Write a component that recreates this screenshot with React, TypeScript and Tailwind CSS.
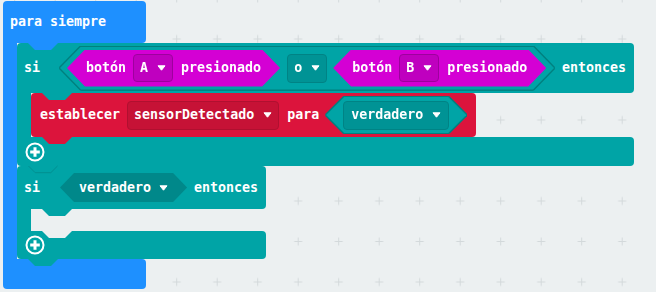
import React from "react"

const hex21 =
	"[clip-path:polygon(21px_0,calc(100%_-_21px)_0,100%_50%,calc(100%_-_21px)_100%,21px_100%,0_50%)]"
const hex18 =
	"[clip-path:polygon(18px_0,calc(100%_-_18px)_0,100%_50%,calc(100%_-_18px)_100%,18px_100%,0_50%)]"
const hex14 =
	"[clip-path:polygon(14px_0,calc(100%_-_14px)_0,100%_50%,calc(100%_-_14px)_100%,14px_100%,0_50%)]"
const tealOutline =
	"[filter:drop-shadow(1px_0_0_#00807f)_drop-shadow(-1px_0_0_#00807f)_drop-shadow(0_1px_0_#00807f)_drop-shadow(0_-1px_0_#00807f)]"

function Arrow() {
	return (
		<svg width="9" height="6" viewBox="0 0 9 6">
			<path
				d="M1 0.8h7L4.5 5.2z"
				fill="white"
				stroke="white"
				strokeWidth="1"
				strokeLinejoin="round"
			/>
		</svg>
	)
}

function Dropdown({ label, className }: { label: string; className: string }) {
	return (
		<div
			className={`flex items-center gap-[9px] rounded-[4px] border px-[6px] ${className}`}
		>
			<span className="leading-none whitespace-pre">{label}</span>
			<Arrow />
		</div>
	)
}

// next-statement tab hanging below a block
function Tab({
	className,
	fill,
	edge,
}: {
	className: string
	fill: string
	edge?: string
}) {
	return (
		<svg
			className={`absolute top-[calc(100%-1px)] z-10 ${className}`}
			width="31"
			height="9"
			viewBox="0 0 31 9"
		>
			<path d="M0 0V1L7 8H23L30 1V0Z" fill={fill} />
			{edge && (
				<path d="M0.5 1L7.2 7.7H22.8L29.5 1" fill="none" stroke={edge} strokeWidth="1" />
			)}
		</svg>
	)
}

function Plus() {
	return (
		<svg width="20" height="20" viewBox="0 0 20 20">
			<circle cx="10" cy="10" r="8.5" fill="none" stroke="white" strokeWidth="2" />
			<path d="M10 5.2v9.6M5.2 10h9.6" stroke="white" strokeWidth="3" />
		</svg>
	)
}

function ButtonPressed({ button }: { button: string }) {
	return (
		<div
			className={`flex h-[37px] items-center bg-[#d400d4] pl-[19px] pr-[19px] ${hex18}`}
		>
			<span className="leading-none">botón</span>
			<Dropdown
				label={button}
				className="ml-[7px] h-[28px] border-[#9e009e] bg-[#bf00bf]"
			/>
			<span className="ml-[8px] leading-none">presionado</span>
		</div>
	)
}

function GridBackground() {
	return (
		<svg className="absolute inset-0" width="656" height="292">
			<defs>
				<pattern
					id="grid"
					x="-5.55"
					y="-21.75"
					width="40.5"
					height="40.5"
					patternUnits="userSpaceOnUse"
				>
					<path
						d="M16.25 20.25h8M20.25 16.25v8"
						stroke="#d3d9db"
						strokeWidth="1"
					/>
				</pattern>
			</defs>
			<rect width="656" height="292" fill="url(#grid)" />
		</svg>
	)
}

export default function App() {
	return (
		<div className="relative h-[292px] w-[656px] overflow-hidden bg-[#ecf0f1] font-['DejaVu_Sans_Mono',monospace] text-[13.3px] font-bold text-white">
			<GridBackground />

			{/* para siempre */}
			<div className="relative flex flex-col items-start pl-[3px] pt-[1px]">
				<div className="relative flex h-[42px] w-[143px] items-center rounded-t-[4px] rounded-br-[4px] bg-[#1e90ff] pl-[7px]">
					<span className="leading-none">para siempre</span>
					<Tab className="left-[25px]" fill="#1e90ff" />
				</div>

				<div className="flex">
					<div className="w-[14px] bg-[#1e90ff]" />
					<div className="flex flex-col items-start">
						{/* si ... entonces (first) */}
						<div className="relative flex flex-col items-start">
							<div className="relative flex h-[50px] w-[617px] items-center rounded-[4px] rounded-bl-none bg-[#00a4a6] pl-[7px]">
								<span className="leading-none">si</span>
								<div className={`ml-[20px] ${tealOutline}`}>
									<div
										className={`flex h-[43px] w-[494px] items-center bg-[#00a4a6] pl-[7px] ${hex21}`}
									>
										<ButtonPressed button="A" />
										<Dropdown
											label="o"
											className="ml-[7px] h-[29px] border-[#008385] bg-[#009395]"
										/>
										<div className="ml-[6px]">
											<ButtonPressed button="B" />
										</div>
									</div>
								</div>
								<span className="ml-[8px] leading-none">entonces</span>
								<Tab className="left-[25px]" fill="#00a4a6" />
							</div>

							<div className="flex">
								<div className="w-[14px] bg-[#00a4a6]" />
								<div className="relative flex h-[44px] w-[445px] items-center rounded-[4px] bg-[#dc143c] pl-[9px]">
									<span className="leading-none">establecer</span>
									<Dropdown
										label="sensorDetectado"
										className="ml-[7px] h-[29px] border-[#b01030] bg-[#c61236]"
									/>
									<span className="ml-[8px] leading-none">para</span>
									<div className={`ml-[7px] ${tealOutline}`}>
										<div
											className={`flex h-[36px] items-center bg-[#00a4a6] px-[17px] ${hex18}`}
										>
											<Dropdown
												label="verdadero"
												className="h-[29px] border-[#008385] bg-[#009395] px-[7px]"
											/>
										</div>
									</div>
									<Tab className="left-[11px]" fill="#dc143c" />
								</div>
							</div>

							<div className="relative flex h-[29px] w-[617px] items-center rounded-r-[4px] rounded-bl-[4px] bg-[#00a4a6] pl-[8px]">
								<Plus />
								<Tab className="left-[11px]" fill="#00a4a6" edge="#008f91" />
							</div>
						</div>

						{/* si verdadero entonces (second) */}
						<div className="relative flex flex-col items-start">
							<div className="relative flex h-[43px] w-[249px] items-center rounded-[4px] rounded-bl-none bg-[#00a4a6] pl-[7px]">
								<span className="leading-none">si</span>
								<div
									className={`ml-[20px] flex h-[29px] items-center gap-[8px] bg-[#00888a] px-[19px] ${hex14}`}
								>
									<span className="leading-none">verdadero</span>
									<Arrow />
								</div>
								<span className="ml-[7px] leading-none">entonces</span>
								<Tab className="left-[25px]" fill="#00a4a6" />
							</div>

							<div className="flex">
								<div className="h-[22px] w-[14px] bg-[#00a4a6]" />
							</div>

							<div className="relative flex h-[28px] w-[249px] items-center rounded-r-[4px] rounded-bl-[4px] bg-[#00a4a6] pl-[8px]">
								<svg
									className="absolute left-[25px] top-0"
									width="30"
									height="7"
									viewBox="0 0 30 7"
								>
									<path d="M0 0L7 7H23L30 0Z" fill="#ecf0f1" />
								</svg>
								<Plus />
								<Tab className="left-[11px]" fill="#00a4a6" />
							</div>
						</div>
					</div>
				</div>

				<div className="h-[30px] w-[143px] rounded-b-[4px] rounded-tr-[4px] bg-[#1e90ff]" />
			</div>
		</div>
	)
}
